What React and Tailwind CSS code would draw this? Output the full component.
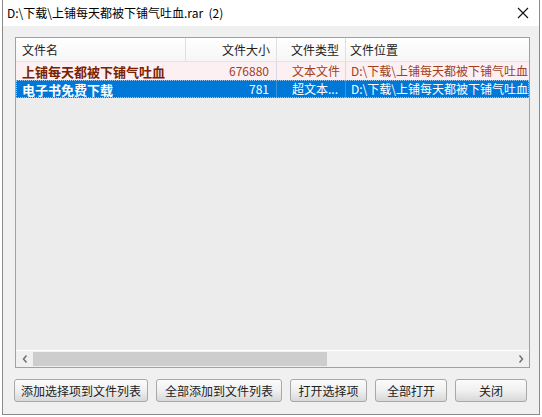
import React from "react";

const font = {
  fontFamily: "'Noto Sans CJK SC', 'Noto Sans', sans-serif",
};

const rows = [
  {
    name: "上铺每天都被下铺气吐血",
    size: "676880",
    type: "文本文件",
    path: "D:\\下载\\上铺每天都被下铺气吐血",
    selected: false,
  },
  {
    name: "电子书免费下载",
    size: "781",
    type: "超文本...",
    path: "D:\\下载\\上铺每天都被下铺气吐血",
    selected: true,
  },
];

const buttons = [
  { label: "添加选择项到文件列表", w: "w-[134px]" },
  { label: "全部添加到文件列表", w: "w-[126px]" },
  { label: "打开选择项", w: "w-[77px]" },
  { label: "全部打开", w: "w-[72px]" },
  { label: "关闭", w: "w-[72px]" },
];

function Chevron({ dir }) {
  return (
    <svg width="8" height="10" viewBox="0 0 8 10">
      <path
        d={dir === "left" ? "M5.5 1.5 L2.5 5 L5.5 8.5" : "M2.5 1.5 L5.5 5 L2.5 8.5"}
        fill="none"
        stroke="#707070"
        strokeWidth="1.5"
      />
    </svg>
  );
}

export default function App() {
  return (
    <div className="w-[542px] h-[417px] bg-white" style={font}>
      <div className="ml-[2px] w-[538px] h-[415px] border-x border-b border-[#8a8a8a] flex flex-col">
        {/* title bar */}
        <div className="h-[26px] bg-white flex items-center justify-between pl-[4px] pr-[10px]">
          <span className="text-[12px] text-black whitespace-pre leading-none">
            {"D:\\下载\\上铺每天都被下铺气吐血.rar  (2)"}
          </span>
          <svg width="12" height="12" viewBox="0 0 12 12">
            <path d="M1 1 L11 11 M11 1 L1 11" stroke="#111" strokeWidth="1.1" />
          </svg>
        </div>

        {/* dialog body */}
        <div className="flex-1 bg-[#f0f0f0] pt-[11px] pl-[12px]">
          <div className="w-[515px] h-[331px] border border-[#a0a0a0] bg-[#ececec] flex flex-col">
            {/* column header */}
            <div className="h-[24px] flex bg-gradient-to-b from-white to-[#f6f6f6] border-b border-[#e3e3e3] text-[12px] text-[#222]">
              <div className="w-[170px] border-r border-[#e0e0e0] flex items-center pl-[6px]">文件名</div>
              <div className="w-[91px] border-r border-[#e0e0e0] flex items-center justify-end pr-[6px]">文件大小</div>
              <div className="w-[69px] border-r border-[#e0e0e0] flex items-center pl-[14px]">文件类型</div>
              <div className="flex-1 flex items-center pl-[4px]">文件位置</div>
            </div>

            {/* rows */}
            <div className="flex-1 bg-[#ececec]">
              {rows.map((r) => (
                <div
                  key={r.name}
                  className={
                    r.selected
                      ? "h-[18px] flex bg-[#0078d7] text-white outline-1 outline-dotted outline-[#9cc8ee] -outline-offset-1"
                      : "h-[18px] flex bg-[#fdf0f3] text-[#a0401a]"
                  }
                >
                  <div
                    className={
                      r.selected
                        ? "w-[170px] flex items-center pl-[6px] text-[13px] font-bold leading-none"
                        : "w-[170px] flex items-center pl-[6px] text-[13px] font-bold leading-none text-[#7a2200]"
                    }
                  >
                    {r.name}
                  </div>
                  <div className="w-[91px] border-r border-[#9db8d6]/40 flex items-center justify-end pr-[7px] text-[12px] leading-none">
                    {r.size}
                  </div>
                  <div className="w-[69px] border-r border-[#9db8d6]/40 flex items-center pl-[15px] text-[12px] leading-none whitespace-nowrap">
                    {r.type}
                  </div>
                  <div className="flex-1 overflow-hidden flex items-center pl-[5px] text-[12px] leading-none whitespace-nowrap">
                    {r.path}
                  </div>
                </div>
              ))}
            </div>

            {/* horizontal scrollbar */}
            <div className="h-[17px] bg-[#f0f0f0] flex items-center border-t border-white">
              <div className="w-[17px] flex justify-center">
                <Chevron dir="left" />
              </div>
              <div className="flex-1 h-full py-[1px]">
                <div className="w-[294px] h-full bg-[#cdcdcd]" />
              </div>
              <div className="w-[17px] flex justify-center">
                <Chevron dir="right" />
              </div>
            </div>
          </div>

          {/* buttons */}
          <div className="flex gap-[8px] mt-[11px] -ml-[1px]">
            {buttons.map((b) => (
              <button
                key={b.label}
                className={`${b.w} h-[23px] rounded-[3px] border border-[#a8a8a8] bg-gradient-to-b from-[#fbfbfb] via-[#f0f0f0] to-[#d8d8d8] text-[12px] text-[#222] leading-none flex items-center justify-center`}
              >
                {b.label}
              </button>
            ))}
          </div>
        </div>
      </div>
    </div>
  );
}
